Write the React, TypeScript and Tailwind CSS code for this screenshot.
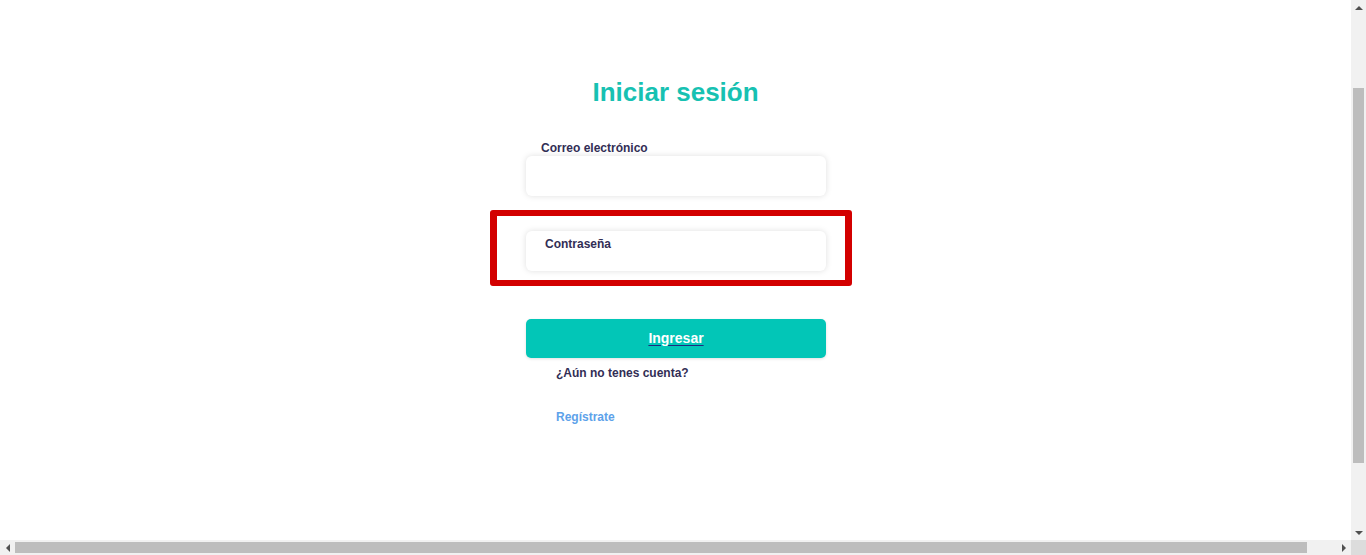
import React from 'react';

const font = { fontFamily: '"Liberation Sans", Arial, sans-serif' };

const Arrow: React.FC<{ dir: 'up' | 'down' | 'left' | 'right' }> = ({ dir }) => {
  const pts = {
    up: '0,4 4,0 8,4',
    down: '0,0 8,0 4,4',
    left: '4,0 4,8 0,4',
    right: '0,0 0,8 4,4',
  }[dir];
  const vertical = dir === 'up' || dir === 'down';
  return (
    <div className="w-[15px] h-[15px] flex items-center justify-center shrink-0">
      <svg width={vertical ? 8 : 4} height={vertical ? 4 : 8} viewBox={vertical ? '0 0 8 4' : '0 0 4 8'}>
        <polygon points={pts} fill="#505050" />
      </svg>
    </div>
  );
};

const LoginForm: React.FC = () => {
  return (
    <div className="flex flex-col items-center pt-[76px]">
      <h1 className="text-[26px] leading-[32px] font-bold text-[#17c1b2]">Iniciar sesión</h1>

      <div className="w-[300px] ml-[1px] mt-[33px] flex flex-col">
        <label className="pl-[15px] text-[12px] leading-[14px] font-bold text-[#322e55]">Correo electrónico</label>
        <input
          type="email"
          className="mt-[1px] h-[40px] w-full rounded-[6px] bg-white shadow-[0_0_6px_rgba(0,0,0,0.13)] outline-none px-3 text-sm"
        />

        <div className="mt-[14px] -ml-[36px] w-[362px] h-[76px] border-x-[7px] border-y-[6px] border-[#d30000] rounded-[3px] pl-[29px] pt-[15px]">
          <div className="w-[300px] h-[40px] rounded-[6px] bg-white shadow-[0_0_6px_rgba(0,0,0,0.13)] pl-[19px] pt-0">
            <span className="text-[12px] leading-[14px] font-bold text-[#322e55]">Contraseña</span>
          </div>
        </div>

        <button className="mt-[33px] h-[39px] w-full rounded-[5px] bg-[#02c6b7] shadow-[0_1px_3px_rgba(0,0,0,0.12)] text-white text-[14px] font-bold underline decoration-[#1f2a80] underline-offset-[2px]">
          Ingresar
        </button>

        <div className="pl-[30px] mt-[8px] text-[12px] leading-[14px] font-bold text-[#322e55]">¿Aún no tenes cuenta?</div>
        <a className="pl-[30px] mt-[30px] text-[12px] leading-[14px] font-bold text-[#5da2ea]" href="#">
          Regístrate
        </a>
      </div>
    </div>
  );
};

export default function App() {
  return (
    <div className="w-[1366px] h-[555px] flex flex-col overflow-hidden bg-white" style={font}>
      <div className="flex h-[540px]">
        <main className="flex-1">
          <LoginForm />
        </main>
        <div className="w-[15px] flex flex-col bg-[#f1f1f1]">
          <Arrow dir="up" />
          <div className="flex-1 pt-[73px] px-[2px]">
            <div className="h-[375px] bg-[#bdbdbd]" />
          </div>
          <Arrow dir="down" />
        </div>
      </div>
      <div className="flex h-[15px] bg-[#f1f1f1]">
        <div className="flex-1 flex">
          <Arrow dir="left" />
          <div className="flex-1 py-[2px]">
            <div className="w-[1292px] h-full bg-[#bdbdbd]" />
          </div>
          <Arrow dir="right" />
        </div>
        <div className="w-[15px] bg-[#dcdcdc]" />
      </div>
    </div>
  );
}
